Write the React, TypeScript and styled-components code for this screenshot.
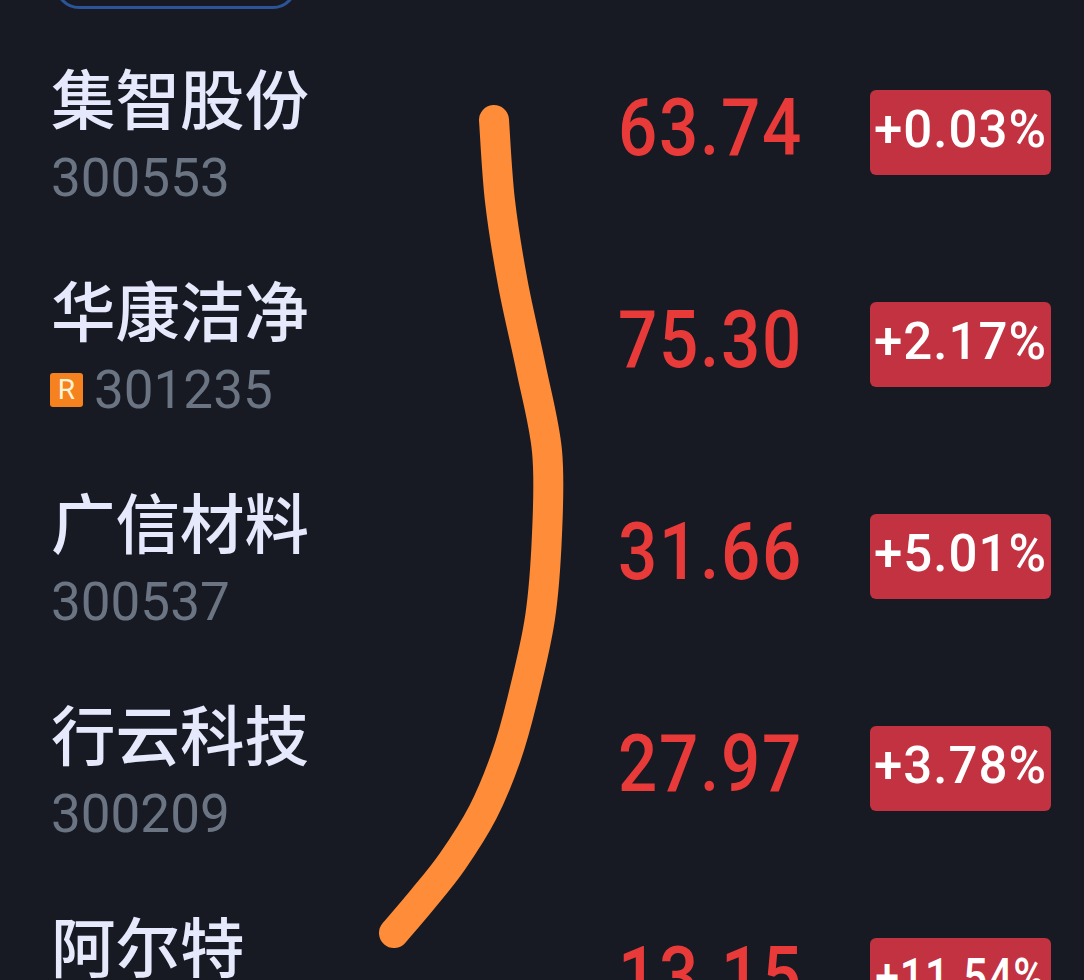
import React from "react";
import styled, { createGlobalStyle } from "styled-components";

const Global = createGlobalStyle`
  html, body { margin: 0; padding: 0; background: #171a23; }
  #root { width: 1084px; }
`;

const Screen = styled.div`
  position: relative;
  width: 1084px;
  height: 980px;
  overflow: hidden;
  background: #171a23;
  font-family: Roboto, "Noto Sans CJK SC", sans-serif;
`;

const TabClip = styled.div`
  height: 9px;
  padding-left: 55px;
  display: flex;
  align-items: flex-end;
  overflow: hidden;
`;

const Tab = styled.div`
  flex: none;
  width: 242px;
  height: 50px;
  box-sizing: border-box;
  border: 3px solid #2c5499;
  border-radius: 24px;
`;

const List = styled.div`
  padding-top: 17px;
`;

const Row = styled.div`
  display: grid;
  grid-template-columns: 567px 252px 181px;
  height: 212px;
  padding-left: 51px;
  align-items: center;
`;

const NameBlock = styled.div`
  height: 152px;
  display: flex;
  flex-direction: column;
`;

const Name = styled.div`
  font-family: "Noto Sans CJK SC", sans-serif;
  font-size: 64.5px;
  font-weight: 500;
  line-height: 80px;
  color: #e6e9fb;
  white-space: nowrap;
`;

const CodeLine = styled.div<{ $tagged: boolean }>`
  display: flex;
  align-items: center;
  height: 70px;
  margin-top: 7px;
  margin-left: ${(p) => (p.$tagged ? "-1px" : "0")};
  gap: 11px;
`;

const Code = styled.span`
  font-size: 53px;
  line-height: 70px;
  color: #6a7482;
`;

const RTag = styled.span`
  flex: none;
  width: 33px;
  height: 34px;
  border-radius: 3px;
  background: #f5821f;
  color: #fff3d6;
  font-size: 28px;
  line-height: 34px;
  text-align: center;
`;

const Price = styled.div`
  font-size: 79px;
  font-weight: 500;
  letter-spacing: 2px;
  line-height: 90px;
  margin-top: -8px;
  color: #e93a3a;
  white-space: nowrap;
  transform: scaleX(0.875);
  transform-origin: left center;
`;

const Badge = styled.div`
  display: flex;
  justify-content: center;
  height: 85px;
  border-radius: 6px;
  background: #c23240;
  color: #fff;
  font-size: 51px;
  font-weight: 500;
  line-height: 85px;
  white-space: nowrap;
`;

const BadgeText = styled.span<{ $squeeze: number }>`
  flex: none;
  margin-top: -3px;
  letter-spacing: 1px;
  transform: scaleX(${(p) => p.$squeeze});
  transform-origin: center;
`;

const Scribble = styled.svg`
  position: absolute;
  inset: 0;
  width: 1084px;
  height: 980px;
  pointer-events: none;
`;

const rows = [
  { name: "集智股份", code: "300553", price: "63.74", pct: "+0.03%" },
  { name: "华康洁净", code: "301235", tag: true, price: "75.30", pct: "+2.17%" },
  { name: "广信材料", code: "300537", price: "31.66", pct: "+5.01%" },
  { name: "行云科技", code: "300209", price: "27.97", pct: "+3.78%" },
  { name: "阿尔特", price: "13.15", pct: "+11.54%", narrow: true },
];

const stroke: [number, number][] = [
  [494, 120], [500, 201], [513, 284], [531, 368], [547, 451], [547, 534],
  [540, 618], [522, 701], [506, 757], [483, 812], [452, 862], [422, 900], [394, 933],
];

function smoothPath(pts: [number, number][]) {
  let d = `M${pts[0][0]} ${pts[0][1]}`;
  for (let i = 0; i < pts.length - 1; i++) {
    const p0 = pts[Math.max(i - 1, 0)];
    const p1 = pts[i];
    const p2 = pts[i + 1];
    const p3 = pts[Math.min(i + 2, pts.length - 1)];
    const c1x = p1[0] + (p2[0] - p0[0]) / 6;
    const c1y = p1[1] + (p2[1] - p0[1]) / 6;
    const c2x = p2[0] - (p3[0] - p1[0]) / 6;
    const c2y = p2[1] - (p3[1] - p1[1]) / 6;
    d += ` C${c1x} ${c1y} ${c2x} ${c2y} ${p2[0]} ${p2[1]}`;
  }
  return d;
}

export default function App() {
  return (
    <Screen>
      <Global />
      <TabClip>
        <Tab />
      </TabClip>
      <List>
        {rows.map((r) => (
          <Row key={r.name}>
            <NameBlock>
              <Name>{r.name}</Name>
              {r.code && (
                <CodeLine $tagged={!!r.tag}>
                  {r.tag && <RTag>R</RTag>}
                  <Code>{r.code}</Code>
                </CodeLine>
              )}
            </NameBlock>
            <Price>{r.price}</Price>
            <Badge>
              <BadgeText $squeeze={r.narrow ? 0.84 : 1}>{r.pct}</BadgeText>
            </Badge>
          </Row>
        ))}
      </List>
      <Scribble viewBox="0 0 1084 980">
        <path
          d={smoothPath(stroke)}
          fill="none"
          stroke="#fe8c38"
          strokeWidth="30"
          strokeLinecap="round"
          strokeLinejoin="round"
        />
      </Scribble>
    </Screen>
  );
}
